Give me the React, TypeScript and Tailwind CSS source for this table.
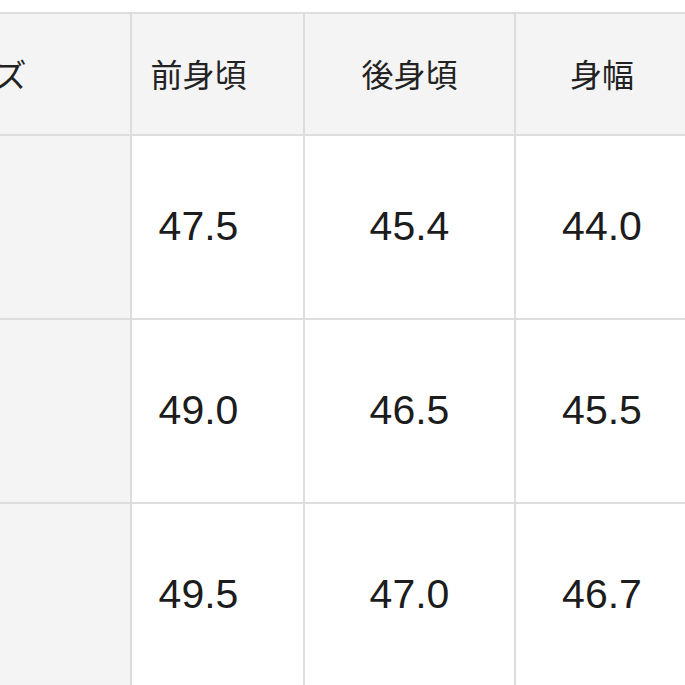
const header = ["サイズ", "前身頃", "後身頃", "身幅"];

const rows = [
  ["", "47.5", "45.4", "44.0"],
  ["", "49.0", "46.5", "45.5"],
  ["", "49.5", "47.0", "46.7"],
];

const cjk = "font-['Noto_Sans_CJK_JP','Noto_Sans',sans-serif]";
const num = "font-['Liberation_Sans',Arial,sans-serif]";

export default function App() {
  return (
    <div className="w-[685px] h-[685px] overflow-hidden bg-white">
      <div className="pt-[12px]">
        <div className="ml-[-172px] w-max grid grid-cols-[302px_171px_209px_172px] grid-rows-[120px_182px_182px_182px] gap-[2px] bg-[#dddddd] pt-[2px]">
          {header.map((h, i) => (
            <div
              key={h}
              className={`bg-[#f4f4f4] flex items-center justify-center pb-[2px] text-[32px] text-[#222] ${cjk} ${
                i === 1 ? "pr-[38px]" : ""
              }`}
            >
              {h}
            </div>
          ))}
          {rows.map((r, ri) =>
            r.map((v, ci) => (
              <div
                key={`${ri}-${ci}`}
                className={`flex items-center justify-center text-[41px] text-[#1c1c1c] ${num} ${
                  ci === 0 ? "bg-[#f4f4f4]" : "bg-white"
                } ${ci === 1 ? "pr-[38px]" : ""}`}
              >
                {v}
              </div>
            ))
          )}
        </div>
      </div>
    </div>
  );
}
